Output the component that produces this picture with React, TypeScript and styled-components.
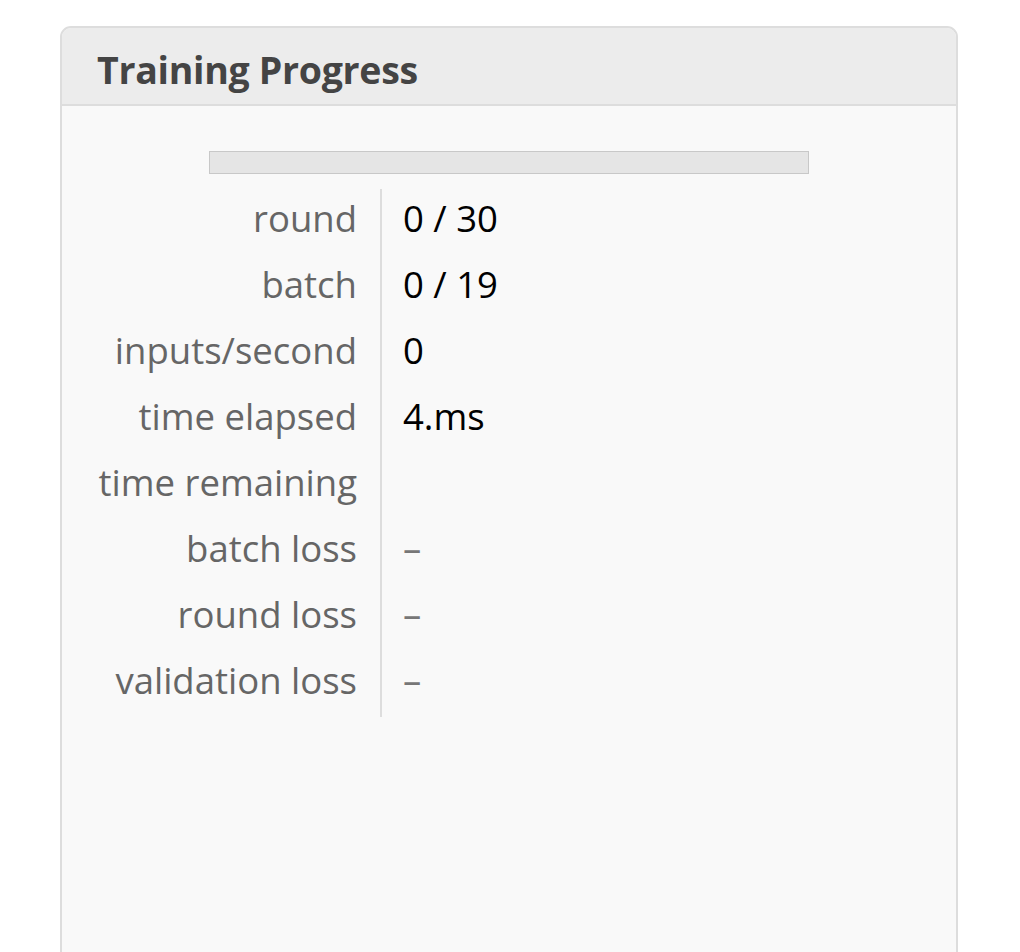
import React from "react";
import styled, { createGlobalStyle } from "styled-components";

const Global = createGlobalStyle`
  html, body { margin: 0; padding: 0; background: #ffffff; }
  body { font-family: "Open Sans", "Noto Sans", sans-serif; overflow: hidden; }
`;

const Page = styled.div`
  padding: 26px 0 0 60px;
  width: 898px;
`;

const Panel = styled.section`
  border: 2px solid #dddddd;
  border-radius: 11px 11px 0 0;
  background: #f9f9f9;
  height: 960px;
  overflow: hidden;
`;

const Header = styled.header`
  height: 78px;
  box-sizing: border-box;
  display: flex;
  align-items: center;
  padding: 6px 0 0 35px;
  background: #ececec;
  border-bottom: 2px solid #dddddd;
`;

const Title = styled.h2`
  margin: 0;
  font-size: 37.5px;
  font-weight: 700;
  color: #444444;
  letter-spacing: -0.3px;
`;

const Body = styled.div`
  padding-top: 45px;
  display: flex;
  flex-direction: column;
`;

const Bar = styled.div`
  align-self: center;
  width: 598px;
  height: 21px;
  border: 1px solid #c8c8c8;
  background: #e5e5e5;
  margin-bottom: 15px;
`;

const Stats = styled.dl`
  margin: 0;
  display: grid;
  grid-template-columns: 318px 1fr;
  grid-auto-rows: 66px;
`;

const Label = styled.dt`
  margin: 0;
  text-align: right;
  padding: 0 23px 8px 0;
  font-size: 36.5px;
  line-height: 58px;
  color: #666666;
  white-space: nowrap;
`;

const Value = styled.dd<{ $muted?: boolean }>`
  margin: 0;
  border-left: 2px solid #dddddd;
  padding: 0 0 8px 21px;
  font-size: 36.5px;
  line-height: 58px;
  color: ${(p) => (p.$muted ? "#777777" : "#000000")};
  white-space: nowrap;
`;

const rows: { label: string; value: string; muted?: boolean }[] = [
  { label: "round", value: "0 / 30" },
  { label: "batch", value: "0 / 19" },
  { label: "inputs/second", value: "0" },
  { label: "time elapsed", value: "4.ms" },
  { label: "time remaining", value: "" },
  { label: "batch loss", value: "–", muted: true },
  { label: "round loss", value: "–", muted: true },
  { label: "validation loss", value: "–", muted: true },
];

export default function App() {
  return (
    <>
      <Global />
      <Page>
        <Panel>
          <Header>
            <Title>Training Progress</Title>
          </Header>
          <Body>
            <Bar />
            <Stats>
              {rows.map((r) => (
                <React.Fragment key={r.label}>
                  <Label>{r.label}</Label>
                  <Value $muted={r.muted}>{r.value}</Value>
                </React.Fragment>
              ))}
            </Stats>
          </Body>
        </Panel>
      </Page>
    </>
  );
}
